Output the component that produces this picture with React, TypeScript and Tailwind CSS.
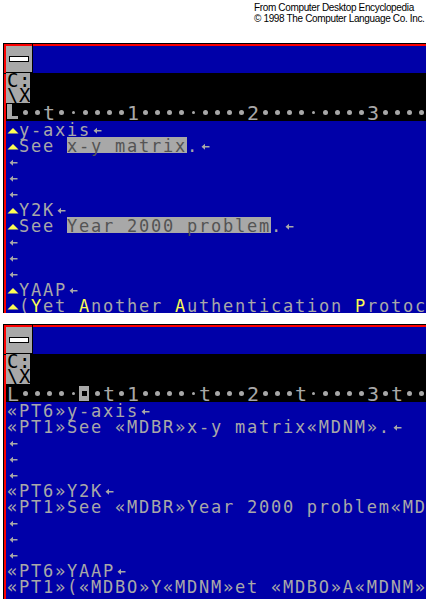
import React from 'react';

type Seg = { k: 'txt' | 'yel' | 'hl' | 'tri' | 'arr'; t?: string };

const tx = (t: string): Seg => ({ k: 'txt', t });
const ye = (t: string): Seg => ({ k: 'yel', t });
const hl = (t: string): Seg => ({ k: 'hl', t });
const TRI: Seg = { k: 'tri' };
const ARR: Seg = { k: 'arr' };

const formatted: Seg[][] = [
  [TRI, tx('y-axis'), ARR],
  [TRI, tx('See '), hl('x-y matrix'), tx('.'), ARR],
  [ARR],
  [ARR],
  [ARR],
  [TRI, tx('Y2K'), ARR],
  [TRI, tx('See '), hl('Year 2000 problem'), tx('.'), ARR],
  [ARR],
  [ARR],
  [ARR],
  [TRI, tx('YAAP'), ARR],
  [TRI, tx('('), ye('Y'), tx('et '), ye('A'), tx('nother '), ye('A'), tx('uthentication '), ye('P'), tx('rotocol)')],
];

const codes: Seg[][] = [
  [tx('«PT6»y-axis'), ARR],
  [tx('«PT1»See «MDBR»x-y matrix«MDNM».'), ARR],
  [ARR],
  [ARR],
  [ARR],
  [tx('«PT6»Y2K'), ARR],
  [tx('«PT1»See «MDBR»Year 2000 problem«MDNM».'), ARR],
  [ARR],
  [ARR],
  [ARR],
  [tx('«PT6»YAAP'), ARR],
  [tx('«PT1»(«MDBO»Y«MDNM»et «MDBO»A«MDNM»nother «MDBO»A«MDNM»uthentication'), ARR],
];

// . big dot, , small dot, # cursor cell, B heavy L
const ruler1 = 'B..t.,....1....,....2....,....3.....';
const ruler2 = 'L....,#.t.1....,t...2...t,....3.t...';

const mono = "font-['DejaVu_Sans_Mono',monospace]";

function Piece({ s }: { s: Seg }) {
  if (s.k === 'tri') {
    return (
      <svg width="12" height="16" viewBox="0 0 12 16" className="block shrink-0">
        <polygon points="0.5,12.5 6,7 11.5,12.5" fill="#fcfc54" />
      </svg>
    );
  }
  if (s.k === 'arr') {
    return (
      <svg width="12" height="16" viewBox="0 0 12 16" className="block shrink-0">
        <path d="M2.5 9.75 L6 6.75 V9 H10.5 V10.5 H6 V12.75 Z" fill="#a8a8a8" />
      </svg>
    );
  }
  const base = `block shrink-0 whitespace-pre text-[17px] leading-[18px] tracking-[1.76px] ${mono}`;
  if (s.k === 'hl') return <span className={`${base} h-[16px] bg-[#a8a8a8] text-[#545454]`}>{s.t}</span>;
  if (s.k === 'yel') return <span className={`${base} text-[#fcfc54]`}>{s.t}</span>;
  return <span className={`${base} text-[#a8a8a8]`}>{s.t}</span>;
}

function RulerCell({ c }: { c: string }) {
  if (c === '.') {
    return (
      <div className="flex h-[18px] w-[12px] shrink-0 items-start justify-center pt-[7px]">
        <div className="h-[5px] w-[5px] rounded-full bg-[#a8a8a8]" />
      </div>
    );
  }
  if (c === ',') {
    return (
      <div className="flex h-[18px] w-[12px] shrink-0 items-start justify-center pt-[8px]">
        <div className="h-[3px] w-[3px] rounded-full bg-[#a8a8a8]" />
      </div>
    );
  }
  if (c === '#') {
    return (
      <div className="flex h-[18px] w-[12px] shrink-0 items-start pt-[2px]">
        <div className="flex h-[15px] w-[10px] items-center justify-center bg-[#a8a8a8]">
          <div className="h-[5px] w-[5px] bg-black" />
        </div>
      </div>
    );
  }
  if (c === 'B') {
    return (
      <div className="h-[18px] w-[12px] shrink-0 pt-[1px]">
        <div className="h-[15px] w-[11px] border-b-[3px] border-l-[5px] border-[#a8a8a8]" />
      </div>
    );
  }
  return (
    <div className={`h-[18px] w-[12px] shrink-0 text-center text-[20px] leading-[20px] text-[#a8a8a8] ${mono}`}>{c}</div>
  );
}

function Screen({ rows, ruler, grow }: { rows: Seg[][]; ruler: string; grow?: boolean }) {
  return (
    <div className={`ml-[3px] flex border-l border-t border-black ${grow ? 'flex-1' : ''}`}>
      <div className="flex w-[2px] shrink-0 flex-col">
        <div className="h-[29px] bg-[#fc0000]" />
        <div className="h-px bg-black" />
        <div className="flex-1 bg-[#fc0000]" />
      </div>
      <div className="flex min-w-0 flex-1 flex-col">
        <div className="flex h-[2px]">
          <div className="w-[26px] bg-[#fc0000]" />
          <div className="w-px bg-black" />
          <div className="flex-1 bg-[#fc0000]" />
        </div>
        <div className="flex h-[27px]">
          <div className="flex w-[27px] items-center justify-center border-b border-r border-black bg-[#a8a8a8]">
            <div className="h-[6px] w-[20px] border border-black bg-white" />
          </div>
          <div className="flex-1 bg-[#0000a8]" />
        </div>
        <div className="h-[30px] bg-black">
          <div className={`w-[24px] bg-[#a8a8a8] pl-px text-[19px] leading-[15px] tracking-[0.5px] text-black ${mono}`}>
            <div className="h-[15px]">C:</div>
            <div className="h-[15px]">\X</div>
          </div>
        </div>
        <div className="flex h-[18px] overflow-hidden bg-black pl-px">
          {ruler.split('').map((c, i) => (
            <RulerCell key={i} c={c} />
          ))}
        </div>
        <div className={`overflow-hidden bg-[#0000a8] pl-px ${grow ? 'flex-1' : 'h-[192px]'}`}>
          {rows.map((r, i) => (
            <div key={i} className="flex h-[16px] items-start">
              {r.map((s, j) => (
                <Piece key={j} s={s} />
              ))}
            </div>
          ))}
        </div>
      </div>
    </div>
  );
}

export default function App() {
  return (
    <div className="flex h-[599px] w-[426px] flex-col overflow-hidden bg-white">
      <div className="h-[43px] shrink-0 pl-[254px] pt-[2px] font-['Liberation_Sans',sans-serif] text-[10px] leading-[11px] tracking-[-0.35px] text-black">
        <div className="whitespace-nowrap">From Computer Desktop Encyclopedia</div>
        <div className="whitespace-nowrap">© 1998 The Computer Language Co. Inc.</div>
      </div>
      <Screen rows={formatted} ruler={ruler1} />
      <div className="h-[11px] shrink-0" />
      <Screen rows={codes} ruler={ruler2} grow />
    </div>
  );
}
